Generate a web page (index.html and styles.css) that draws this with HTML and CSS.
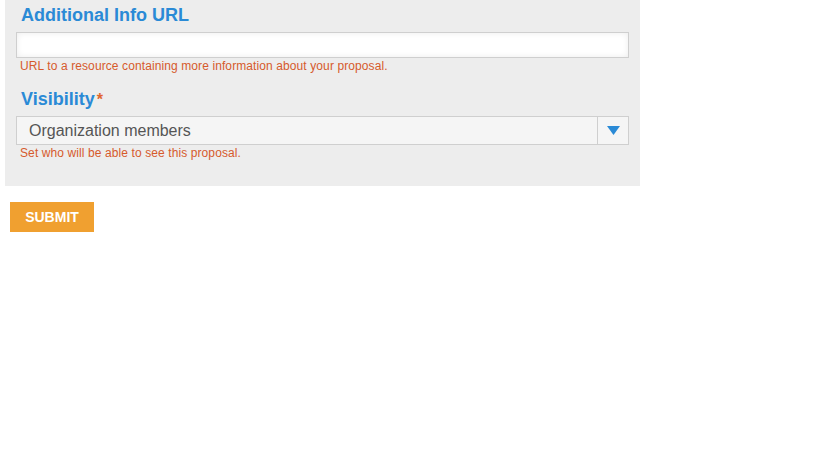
FILE: index.html
```html
<!DOCTYPE html>
<html lang="en">
<head>
  <meta charset="UTF-8">
  <title>New proposal</title>
  <link rel="stylesheet" href="styles.css">
</head>
<body>
  <main class="page">
    <form class="proposal-form">
      <div class="form-panel">
        <div class="form-group">
          <label class="field-label" for="info-url">Additional Info URL</label>
          <input class="text-input" type="text" id="info-url" name="info_url">
          <p class="help-text">URL to a resource containing more information about your proposal.</p>
        </div>

        <div class="form-group">
          <label class="field-label" for="visibility">Visibility<span class="required">*</span></label>
          <div class="select-wrap">
            <select class="select-input" id="visibility" name="visibility">
              <option>Organization members</option>
              <option>Everyone</option>
              <option>Only me</option>
            </select>
            <span class="select-arrow">
              <svg width="13" height="9" viewBox="0 0 13 9"><path d="M0 0H13L6.5 9Z" fill="#2a8ad6"/></svg>
            </span>
          </div>
          <p class="help-text">Set who will be able to see this proposal.</p>
        </div>
      </div>

      <button type="submit" class="submit-btn">SUBMIT</button>
    </form>
  </main>
</body>
</html>
```

FILE: styles.css
```css
body {
  margin: 0;
  font-family: Arial, "Liberation Sans", sans-serif;
  background: #fff;
}
.page {
  padding: 0 5px;
}
.form-panel {
  width: 613px;
  background: #ededed;
  padding: 3px 11px 26px 11px;
}
.form-group {
  margin-bottom: 14px;
}
.form-group:last-child {
  margin-bottom: 0;
}
.field-label {
  display: block;
  padding-left: 5px;
  font-size: 18px;
  font-weight: bold;
  color: #2a8ad6;
  line-height: 24px;
  margin-bottom: 5px;
}
.required {
  color: #e0662f;
  font-size: 16px;
  line-height: 0;
  margin-left: 2px;
}
.text-input {
  display: block;
  box-sizing: border-box;
  width: 100%;
  height: 26px;
  border: 1px solid #cfcfcf;
  background: #fff;
  box-shadow: inset 0 0 6px rgba(0,0,0,0.08);
  margin: 0;
}
.help-text {
  margin: 1px 0 0;
  padding-left: 4px;
  font-size: 12px;
  line-height: 14px;
  letter-spacing: 0.1px;
  color: #d65a2c;
}
.select-wrap {
  position: relative;
  height: 29px;
}
.select-input {
  -webkit-appearance: none;
  appearance: none;
  box-sizing: border-box;
  width: 100%;
  height: 29px;
  border: 1px solid #cfcfcf;
  border-radius: 0;
  background: #f5f5f5;
  padding: 0 0 0 12px;
  font-family: inherit;
  font-size: 16px;
  color: #555;
  margin: 0;
}
.select-arrow {
  position: absolute;
  top: 1px;
  right: 1px;
  width: 30px;
  height: 27px;
  border-left: 1px solid #cfcfcf;
  display: flex;
  align-items: center;
  justify-content: center;
  pointer-events: none;
}
.submit-btn {
  display: block;
  margin: 16px 0 0 5px;
  width: 84px;
  height: 30px;
  border: none;
  background: #f0a030;
  color: #fff;
  font-family: inherit;
  font-size: 14px;
  font-weight: bold;
  cursor: pointer;
}
```
